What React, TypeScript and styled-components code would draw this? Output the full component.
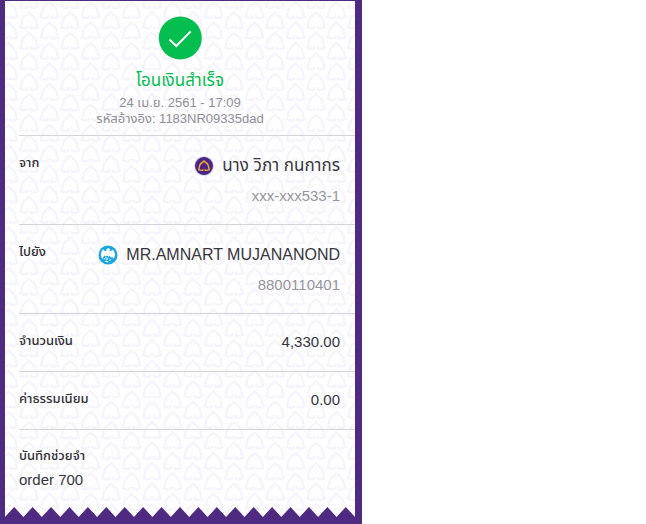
import React from "react";
import styled, { createGlobalStyle } from "styled-components";

const GlobalStyle = createGlobalStyle`
  * { box-sizing: border-box; }
  body {
    margin: 0;
    background: #ffffff;
    color: #38363c;
    font-family: "Liberation Sans", "Noto Sans Thai", "Noto Sans", sans-serif;
  }
`;

const Slip = styled.main`
  width: 100%;
  max-width: 362px;
  padding: 1px 7px 7px 5px;
  background: #4e2a80;
`;

const Paper = styled.article`
  position: relative;
  background: #fefefe;
`;

const Backdrop = styled.svg`
  position: absolute;
  inset: 0;
  width: 100%;
  height: 100%;
`;

const Content = styled.div`
  position: relative;
  padding-left: 14px;
`;

const Header = styled.header`
  display: flex;
  flex-direction: column;
  align-items: center;
  padding: 15px 14px 8px 0;
  border-bottom: 1px solid #d5d2dc;
`;

const Title = styled.h1`
  margin: 8px 0 1px;
  font-size: 17px;
  line-height: 26px;
  font-weight: 400;
  color: #04be50;
`;

const Meta = styled.p`
  margin: 0;
  font-size: 13px;
  line-height: 16px;
  color: #8f8e95;
  white-space: nowrap;
`;

const Row = styled.section<{ $tall?: boolean }>`
  display: flex;
  justify-content: space-between;
  align-items: flex-start;
  min-height: ${(p) => (p.$tall ? 89 : 58)}px;
  padding: 17px 15px 0 0;
  border-bottom: 1px solid #d5d2dc;
`;

const Label = styled.h2`
  margin: 0;
  font-size: 13px;
  line-height: 20px;
  font-weight: 500;
  color: #2f2d33;
  white-space: nowrap;
`;

const Party = styled.div`
  display: flex;
  flex-direction: column;
  align-items: flex-end;
  gap: 7px;
`;

const Name = styled.div`
  display: flex;
  align-items: center;
  gap: 8px;
  font-size: 16px;
  line-height: 26px;
  white-space: nowrap;
`;

const ThaiName = styled.span`
  font-size: 17px;
`;

const Account = styled.div`
  font-size: 15px;
  line-height: 20px;
  color: #96959c;
`;

const Amount = styled.div`
  padding-top: 1px;
  font-size: 15px;
  line-height: 20px;
`;

const Note = styled.section`
  padding: 16px 15px 17px 0;
`;

const NoteText = styled.p`
  margin: 4px 0 0;
  font-size: 15px;
  line-height: 20px;
`;

const TornEdge = styled.svg`
  position: relative;
  display: block;
  width: 100%;
  height: 10px;
`;

const LEAF =
  "M-1.4 15 L-1.9 17.2 C-4.2 17.9 -6.4 17.6 -8.7 16.3 C-7.5 13.6 -7.6 11 -6.7 8.6 C-5.4 5.4 -2.2 3.9 0 1.4 C2.2 3.9 5.4 5.4 6.7 8.6 C7.6 11 7.5 13.6 8.7 16.3 C6.4 17.6 4.2 17.9 1.9 17.2 L1.4 15";

const LEAF_SPOTS = [
  [0.5, -20.5],
  [41.5, -20.5],
  [0.5, 0],
  [41.5, 0],
  [0.5, 20.5],
  [41.5, 20.5],
  [21, -10.2],
  [21, 10.3],
  [21, 30.8],
];

function LeafBackdrop() {
  return (
    <Backdrop aria-hidden="true">
      <defs>
        <pattern id="leaves" width="41" height="41" x="3" y="20" patternUnits="userSpaceOnUse">
          <g fill="none" stroke="#f7f5fc" strokeWidth="2.4" strokeLinejoin="round">
            {LEAF_SPOTS.map(([x, y]) => (
              <path key={`${x},${y}`} d={LEAF} transform={`translate(${x} ${y})`} />
            ))}
          </g>
        </pattern>
      </defs>
      <rect width="100%" height="100%" fill="url(#leaves)" />
    </Backdrop>
  );
}

function CheckIcon() {
  return (
    <svg width="44" height="44" viewBox="0 0 44 44" role="img" aria-label="สำเร็จ">
      <circle cx="22.3" cy="22" r="21.5" fill="#04be50" />
      <path d="M11.5 23.6 L18.3 30 L32.7 15.4" fill="none" stroke="#fff" strokeWidth="2" />
    </svg>
  );
}

function PurpleBankIcon() {
  return (
    <svg width="20" height="20" viewBox="0 0 20 20" aria-hidden="true">
      <circle cx="10" cy="10" r="9.8" fill="#c9bfdc" />
      <circle cx="10" cy="10" r="8.9" fill="#4a2585" />
      <path
        d="M9.2 13.2 L8.8 14.2 C7.4 14.5 6.1 14.3 4.8 13.6 C5.5 12 5 10.8 6 8.8 C6.9 7.1 8.7 6.4 10 5 C11.3 6.4 13.1 7.1 14 8.8 C15 10.8 14.5 12 15.2 13.6 C13.9 14.3 12.6 14.5 11.2 14.2 L10.8 13.2"
        fill="none"
        stroke="#eeab2d"
        strokeWidth="1.4"
      />
    </svg>
  );
}

function BlueBankIcon() {
  return (
    <svg width="20" height="20" viewBox="0 0 20 20" aria-hidden="true">
      <circle cx="10" cy="10" r="9.5" fill="#18a5e1" />
      <path
        d="M3.4 12.2 C2.2 9 3.2 5.8 5.6 4.2 C5.8 5.8 7 6.4 8.4 5.8 C8 4 9.4 3 11 3.4 L12.6 4.6 L11.2 5.4 C12 6.6 13.8 6 14.4 4.4 C17 6.4 17.6 9.6 16.4 12.2 L15 14 L14.4 11.4 L13 12.8 L12 10.8 L10.4 12 L9.4 10.4 L7.8 11.4 L6.4 10.6 L5.2 12.4 L4.4 14 Z"
        fill="#fff"
      />
      <path
        d="M6 14.4 C6.6 12.6 8.8 12.2 9.6 13.6 C9.6 15 7.8 15.2 7.8 14.2 M11.4 13.6 L12.4 14.6 L11.6 16 M7 16.4 L10.4 16.8"
        fill="none"
        stroke="#fff"
        strokeWidth="1"
      />
    </svg>
  );
}

const TEETH = 19;
const tornPoints = Array.from({ length: TEETH }, (_, i) => `${i * 2},10 ${i * 2 + 1},0`).join(" ");

export default function App() {
  return (
    <>
      <GlobalStyle />
      <Slip>
        <Paper>
          <LeafBackdrop />
          <Content>
            <Header>
              <CheckIcon />
              <Title>โอนเงินสำเร็จ</Title>
              <Meta>24 เม.ย. 2561 - 17:09</Meta>
              <Meta>รหัสอ้างอิง: 1183NR09335dad</Meta>
            </Header>
            <Row $tall>
              <Label>จาก</Label>
              <Party>
                <Name>
                  <PurpleBankIcon />
                  <ThaiName>นาง วิภา กนกากร</ThaiName>
                </Name>
                <Account>xxx-xxx533-1</Account>
              </Party>
            </Row>
            <Row $tall>
              <Label>ไปยัง</Label>
              <Party>
                <Name>
                  <BlueBankIcon />
                  <span>MR.AMNART MUJANANOND</span>
                </Name>
                <Account>8800110401</Account>
              </Party>
            </Row>
            <Row>
              <Label>จำนวนเงิน</Label>
              <Amount>4,330.00</Amount>
            </Row>
            <Row>
              <Label>ค่าธรรมเนียม</Label>
              <Amount>0.00</Amount>
            </Row>
            <Note>
              <Label>บันทึกช่วยจำ</Label>
              <NoteText>order 700</NoteText>
            </Note>
          </Content>
          <TornEdge viewBox="0 0 38 10" preserveAspectRatio="none" aria-hidden="true">
            <polygon points={`${tornPoints} 38,10`} fill="#4e2a80" />
          </TornEdge>
        </Paper>
      </Slip>
    </>
  );
}
